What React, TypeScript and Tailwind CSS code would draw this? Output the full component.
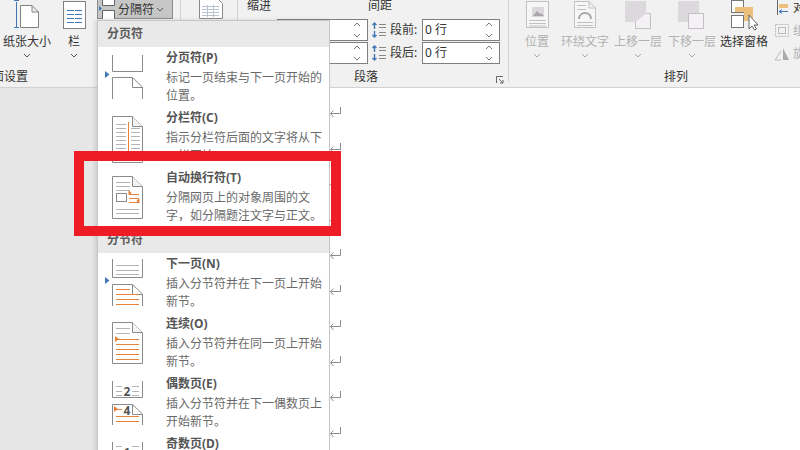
import React from "react";

const G = "#8a8a8a";
const L = "#b4b4b4";
const O = "#e8833a";
const B = "#3f78b5";

const Tri = ({ y }: { y: number }) => <path d={`M7 ${y}l4.5 3.5l-4.5 3.5z`} fill={B} />;

const Lines = ({ ys, x1 = 18, x2 = 41, c = L }: { ys: number[]; x1?: number; x2?: number; c?: string }) => (
  <>
    {ys.map((y) => (
      <path key={y} d={`M${x1} ${y}.5H${x2}`} stroke={c} fill="none" />
    ))}
  </>
);

const Page = ({ y, h }: { y: number; h: number }) => (
  <>
    <path d={`M14.5 ${y}.5H34.5L44.5 ${y + 10}.5V${y + h}.5H14.5Z`} fill="#fff" stroke={G} />
    <path d={`M34.5 ${y}.5V${y + 10}.5H44.5`} fill="#f4f4f4" stroke={G} />
  </>
);

const menuIcons: Record<string, React.ReactNode> = {
  page: (
    <>
      <path d="M14.5 8V24.5H44.5V8" fill="none" stroke={G} />
      <path d="M14.5 52V30.5H34.5L44.5 40V52M34.5 30.5V40.5H44.5" fill="none" stroke={G} />
      <Tri y={24} />
    </>
  ),
  column: (
    <>
      <Page y={9} h={46} />
      <Lines ys={[17, 21, 25, 29, 33, 37, 41, 45, 49]} x1={18} x2={28} />
      <Lines ys={[21, 25, 29, 33, 37, 41, 45, 49]} x1={33} x2={42} />
      <path d="M30.5 15V52" stroke={O} fill="none" />
    </>
  ),
  wrap: (
    <>
      <Page y={9} h={42} />
      <Lines ys={[15, 19, 23]} x2={32} />
      <Lines ys={[42, 46]} />
      <rect x="18.5" y="26.5" width="10" height="8" fill="none" stroke={G} />
      <Lines ys={[27, 31, 35]} x1={31} x2={41} c={O} />
      <path d="M31 24v4l2-2zM41 32v4l-2-2z" fill={O} stroke={O} />
    </>
  ),
  next: (
    <>
      <path d="M14.5 6V24.5H44.5V6" fill="none" stroke={G} />
      <Lines ys={[12, 17, 21]} />
      <path d="M14.5 53V31.5H34.5L44.5 41V53M34.5 31.5V41.5H44.5" fill="none" stroke={G} />
      <Lines ys={[36]} x2={32} c={O} />
      <Lines ys={[41, 46, 51]} c={O} />
      <Tri y={24} />
    </>
  ),
  cont: (
    <>
      <Page y={9} h={41} />
      <Lines ys={[15, 20]} x2={32} />
      <Lines ys={[26, 31, 36, 41, 46]} c={O} />
      <path d="M17 23l4 3l-4 3z" fill={O} />
    </>
  ),
  even: (
    <>
      <path d="M14.5 8V24.5H44.5V8" fill="none" stroke={G} />
      <Lines ys={[13, 18, 22]} x2={24} />
      <Lines ys={[13, 18, 22]} x1={34} />
      <text x="29" y="23" textAnchor="middle" fontSize="12" fontWeight="700" fill="#555">2</text>
      <path d="M14.5 52V31.5H34.5L44.5 41V52M34.5 31.5V41.5H44.5" fill="none" stroke={G} />
      <Lines ys={[36]} x1={18} x2={24} c={O} />
      <Lines ys={[43, 48]} c={O} />
      <path d="M16 33l4 3l-4 3z" fill={O} />
      <text x="29" y="42" textAnchor="middle" fontSize="12" fontWeight="700" fill="#555">4</text>
    </>
  ),
  odd: (
    <>
      <path d="M14.5 9V24.5H44.5V9" fill="none" stroke={G} />
      <Lines ys={[13, 18]} x2={24} />
      <Lines ys={[13, 18]} x1={34} />
      <text x="29" y="24" textAnchor="middle" fontSize="12" fontWeight="700" fill="#555">1</text>
    </>
  ),
};

const Item = ({ icon, title, desc }: { icon: string; title: string; desc: string[] }) => (
  <div className="flex h-[60px] shrink-0 overflow-hidden bg-white">
    <svg width="68" height="60" className="shrink-0">{menuIcons[icon]}</svg>
    <div className="pt-[2px] pr-1 whitespace-nowrap">
      <div className="text-[12px] leading-[18px] font-bold text-[#555]">{title}</div>
      <div className="mt-[2px] text-[12px] leading-[18px] text-[#6a6a6a]">
        {desc.map((d) => (
          <div key={d}>{d}</div>
        ))}
      </div>
    </div>
  </div>
);

const Head = ({ children }: { children: string }) => (
  <div className="h-[26px] shrink-0 bg-[#e9e9e9] pl-[9px] text-[12px] leading-[26px] font-bold text-[#5c5c5c]">{children}</div>
);

const Chev = ({ c = "#555" }: { c?: string }) => (
  <svg width="8" height="5"><path d="M1 1l3 3l3-3" fill="none" stroke={c} /></svg>
);

const Tool = ({ w, label, off, chev = true, children }: { w: number; label: string; off?: boolean; chev?: boolean; children: React.ReactNode }) => (
  <div className="flex shrink-0 flex-col items-center" style={{ width: w }}>
    <svg width={w} height="33" className="shrink-0">{children}</svg>
    <div className={`h-[17px] whitespace-nowrap text-[12px] leading-[17px] ${off ? "text-[#b2b2b2]" : "text-[#333]"}`}>{label}</div>
    <div className="mt-[2px] flex h-[7px] items-center">{chev && <Chev c={off ? "#aaa" : "#555"} />}</div>
  </div>
);

const Spin = ({ w, value }: { w: number; value?: string }) => (
  <div className="flex h-[22px] items-center justify-between border border-[#7f7f7f] bg-white pr-[6px] pl-[2px]" style={{ width: w }}>
    <span className="text-[12px] leading-none text-[#333]">{value}</span>
    <svg width="8" height="18"><path d="M1 5l3-3l3 3M1 13l3 3l3-3" fill="none" stroke="#777" /></svg>
  </div>
);

const SpaceIcon = ({ flip }: { flip?: boolean }) => (
  <svg width="16" height="16" className={`shrink-0 ${flip ? "-scale-y-100" : ""}`}>
    <path d="M3.5 1V7M1.5 3l2-2l2 2M3.5 9V15M1.5 13l2 2l2-2" fill="none" stroke={B} strokeWidth="1.4" />
    <path d="M8 2.5h7M8 5.5h7M8 10.5h7M8 13.5h7" stroke="#888" fill="none" />
  </svg>
);

const Mark = () => (
  <div className="h-[35.5px] shrink-0">
    <svg width="12" height="12"><path d="M10.5 0V6.5H1M3.5 3.5l-3 3l3 3.5" fill="none" stroke="#8c8c8c" /></svg>
  </div>
);

export default function App() {
  return (
    <div className="relative flex h-[450px] w-[800px] flex-col overflow-hidden bg-white font-['Noto_Sans','Noto_Sans_CJK_SC',sans-serif]">
      {/* ribbon */}
      <div className="flex h-[88px] shrink-0 border-b border-[#d2d2d2] bg-[#f1f1f1]">
        <div className="flex h-[82px] w-[180px] shrink-0 flex-col">
          <div className="flex h-[64px] shrink-0">
            <Tool w={54} label="纸张大小">
              <path d="M16.5 2V27M14 0.5H19M14 27.5H19" stroke={B} fill="none" />
              <path d="M20.5 5.5H32L38.5 12V27.5H20.5ZM32 5.500V12H38.5" fill="#fff" stroke="#808080" />
            </Tool>
            <Tool w={40} label="栏">
              <rect x="9.5" y="1.5" width="22" height="27" fill="#fff" stroke="#808080" />
              <path d="M13 10.5h7M13 14.5h7M13 18.5h7M13 22.5h7M21 10.5h7M21 14.500h7M21 18.5h7M21 22.5h7" stroke={B} fill="none" />
            </Tool>
          </div>
          <div className="-ml-5 text-[12px] leading-[25px] whitespace-nowrap text-[#333]">页面设置</div>
        </div>
        <div className="flex h-[82px] w-[328px] shrink-0 flex-col border-l border-[#d2d2d2]">
          <div className="flex h-[64px] shrink-0">
            <div className="w-[57px] shrink-0 border-r border-[#d2d2d2] pl-[18px]">
              <svg width="26" height="19" className="block">
                <path d="M0.5 -3H17L23.5 3.5V18.500H0.5Z" fill="#fff" stroke="#8a8a8a" />
                <path d="M3 6.500h17M3 9.500h17M3 12.500h17M3 15.500h17M8.500 5V17M14.500 5V17" stroke="#b9c2cf" fill="none" />
              </svg>
            </div>
            <div className="w-[130px] shrink-0 pl-[9px]">
              <div className="h-[19px] text-[12px] leading-[12px] text-[#333]">缩进</div>
              <div className="ml-auto flex w-[91px] flex-col gap-px">
                <Spin w={91} />
                <Spin w={91} />
              </div>
            </div>
            <div className="w-[132px] shrink-0">
              <div className="h-[19px] text-[12px] leading-[12px] text-[#333]">间距</div>
              <div className="flex flex-col gap-px">
                <div className="flex h-[22px] items-center">
                  <span className="ml-[3px]"><SpaceIcon /></span>
                  <span className="ml-[3px] w-[32px] text-[12px] text-[#333]">段前:</span>
                  <Spin w={78} value="0 行" />
                </div>
                <div className="flex h-[22px] items-center">
                  <span className="ml-[3px]"><SpaceIcon flip /></span>
                  <span className="ml-[3px] w-[32px] text-[12px] text-[#333]">段后:</span>
                  <Spin w={78} value="0 行" />
                </div>
              </div>
            </div>
          </div>
          <div className="relative h-[18px] pl-[173px] text-[12px] leading-[26px] text-[#333]">
            段落
            <svg width="8" height="8" className="absolute top-[12px] right-[4px]"><path d="M0.5 7V0.5H7M3 3l4 4M7 4V7H4" fill="none" stroke="#666" /></svg>
          </div>
        </div>
        <div className="flex h-[82px] flex-1 flex-col border-l border-[#d2d2d2]">
          <div className="flex h-[64px] shrink-0 pl-[4px]">
            <Tool w={48} label="位置" off>
              <rect x="13.5" y="1.5" width="22" height="26" fill="#f6f6f6" stroke="#c4bfc4" />
              <rect x="19" y="7" width="12" height="10" fill="#dcd9dc" />
              <path d="M20 16l4-5l3 3l1-1l3 3z" fill="#a9a5a9" />
              <path d="M16 20.500h17M16 23.500h17M16 26h17" stroke="#c4bfc4" fill="none" />
            </Tool>
            <Tool w={48} label="环绕文字" off>
              <path d="M13.500 1.500H28L34.500 8V27.500H13.500ZM28 1.500V8H34.500" fill="#f6f6f6" stroke="#c4bfc4" />
              <path d="M16 5.500h9M16 9.500h9M16 22.500h16M16 25.500h16" stroke="#c4bfc4" fill="none" />
              <path d="M18 19c0-8 12-8 12 0" fill="none" stroke="#a9a5a9" strokeWidth="2" />
            </Tool>
            <Tool w={58} label="上移一层" off>
              <rect x="16" y="1" width="21" height="21" fill="#dcd9dc" />
              <path d="M37 13.500H41.500V28.500H26.500V22" fill="#f4f1f4" stroke="#c4bfc4" />
            </Tool>
            <Tool w={50} label="下移一层" off>
              <rect x="11" y="1" width="21" height="21" fill="#dcd9dc" />
              <rect x="21.500" y="13.500" width="15" height="15" fill="#f4f1f4" stroke="#c4bfc4" />
            </Tool>
            <Tool w={54} label="选择窗格" chev={false}>
              <rect x="14.500" y="0.500" width="12" height="12" fill="#fff" stroke="#777" />
              <rect x="27" y="7" width="9" height="14" fill="#ecc07a" />
              <rect x="18" y="7" width="9" height="5" fill="#ecc07a" />
              <rect x="14.500" y="15.500" width="12" height="12" fill="#fff" stroke="#777" />
              <path d="M32 15V29l3-3l2.500 4l2-1l-2.500-4h4z" fill="#fff" stroke="#666" />
            </Tool>
            <div className="ml-[2px] flex flex-col gap-[7px] overflow-hidden text-[12px] leading-[16px] whitespace-nowrap">
              <div className="flex items-center gap-[3px] text-[#333]">
                <svg width="17" height="16" className="shrink-0"><path d="M4.500 0V15" stroke="#666" /><path d="M6 4h9v4H6z" fill="#ecc07a" /><path d="M6 11.500h9M6 11.500l3-2M6 11.500l3 2" stroke={B} fill="none" /></svg>
                对
              </div>
              <div className="flex items-center gap-[3px] text-[#b2b2b2]">
                <svg width="17" height="16" className="shrink-0"><rect x="2.500" y="1.500" width="13" height="12" fill="none" stroke="#bbb" strokeDasharray="2 1" /><rect x="5.500" y="4.500" width="7" height="6" fill="none" stroke="#bbb" /></svg>
                组
              </div>
              <div className="flex items-center gap-[3px] text-[#b2b2b2]">
                <svg width="17" height="16" className="shrink-0"><path d="M10 2V14H16Z" fill="#aaa" /><path d="M8 5L2 14H8" fill="none" stroke="#bbb" /></svg>
                旋
              </div>
            </div>
          </div>
          <div className="h-[18px] pl-[155px] text-[12px] leading-[26px] text-[#333]">排列</div>
        </div>
      </div>

      {/* document area */}
      <div className="flex flex-1 overflow-hidden">
        <div className="w-[200px] bg-[#e6e6e6]" />
        <div className="flex-1 overflow-hidden bg-white pt-[19px] pl-[130px]">
          {Array.from({ length: 10 }).map((_, i) => (
            <Mark key={i} />
          ))}
        </div>
      </div>

      {/* breaks button */}
      <div className="absolute top-[-4px] left-[97px] flex h-[23px] w-[76px] items-center border border-[#8c8c8c] bg-[#c6c6c6] pt-1 text-[12px] text-[#333]">
        <svg width="19" height="19" className="shrink-0"><path d="M4.500 0V5.500H16.500V0M4.500 19V10.500H16.500V19" fill="#fff" stroke="#666" /><path d="M1 6l3 2.500l-3 2.500z" fill={B} /></svg>
        <span className="ml-px">分隔符</span>
        <span className="ml-[2px]"><Chev /></span>
      </div>

      {/* dropdown */}
      <div className="absolute top-[20px] left-[97px] flex h-[440px] w-[233px] flex-col overflow-hidden border border-[#c6c6c6] bg-white shadow-[-2px_0_4px_rgba(0,0,0,0.12)]">
        <Head>分页符</Head>
        <Item icon="page" title="分页符(P)" desc={["标记一页结束与下一页开始的", "位置。"]} />
        <Item icon="column" title="分栏符(C)" desc={["指示分栏符后面的文字将从下", "一栏开始。"]} />
        <Item icon="wrap" title="自动换行符(T)" desc={["分隔网页上的对象周围的文", "字，如分隔题注文字与正文。"]} />
        <Head>分节符</Head>
        <Item icon="next" title="下一页(N)" desc={["插入分节符并在下一页上开始", "新节。"]} />
        <Item icon="cont" title="连续(O)" desc={["插入分节符并在同一页上开始", "新节。"]} />
        <Item icon="even" title="偶数页(E)" desc={["插入分节符并在下一偶数页上", "开始新节。"]} />
        <Item icon="odd" title="奇数页(D)" desc={["插入分节符并在下一奇数页上", "开始新节。"]} />
      </div>

      {/* red annotation */}
      <div className="absolute top-[151px] left-[74px] h-[85px] w-[267px] border-[10px] border-[#ee1c25]" />
    </div>
  );
}
